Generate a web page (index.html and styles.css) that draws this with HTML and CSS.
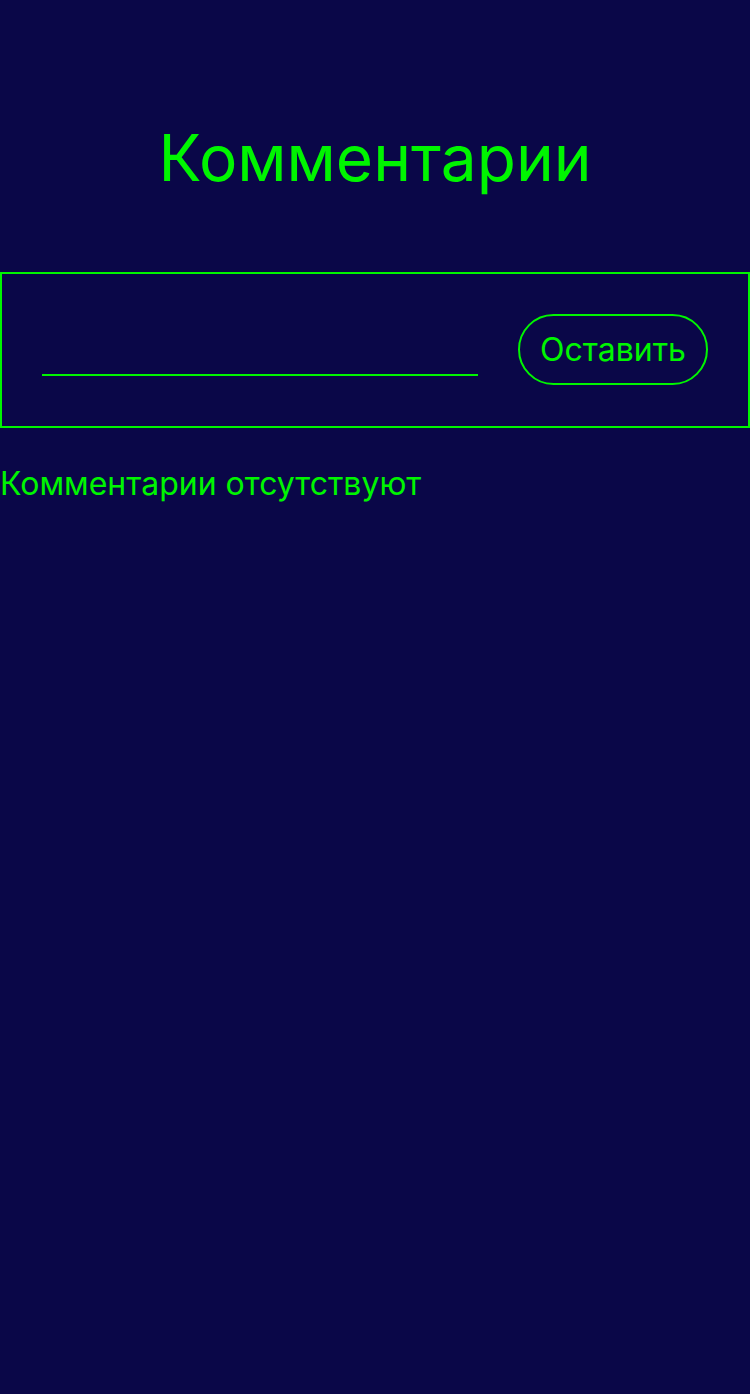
FILE: index.html
```html
<!DOCTYPE html>
<html lang="ru">
<head>
<meta charset="utf-8">
<title>Комментарии</title>
<link rel="stylesheet" href="styles.css">
</head>
<body>
<main class="page">
  <h1 class="title">Комментарии</h1>
  <form class="comment-form">
    <input class="comment-input" type="text" aria-label="Комментарий">
    <button class="submit-btn" type="button">Оставить</button>
  </form>
  <p class="empty">Комментарии отсутствуют</p>
</main>
</body>
</html>
```

FILE: styles.css
```css
html, body {
  margin: 0;
  padding: 0;
  background: #0a0748;
  min-height: 100%;
}
body {
  font-family: Inter, "Noto Sans", sans-serif;
  color: #00f500;
  height: 1394px;
}
.page {
  display: flex;
  flex-direction: column;
}
.title {
  margin: 0 0 75px;
  padding-top: 120px;
  font-size: 64px;
  font-weight: 400;
  line-height: 1.2;
  text-align: center;
}
.comment-form {
  display: flex;
  align-items: center;
  gap: 40px;
  height: 152px;
  padding: 0 40px;
  border: 2px solid #00f500;
}
.comment-input {
  flex: 1;
  min-width: 0;
  height: 53px;
  box-sizing: border-box;
  background: transparent;
  border: none;
  border-bottom: 2px solid #00f500;
  color: #00f500;
  font: inherit;
  font-size: 32px;
  outline: none;
  padding: 0;
}
.submit-btn {
  box-sizing: border-box;
  height: 71px;
  width: 190px;
  padding: 0;
  border: 2px solid #00f500;
  border-radius: 36px;
  background: transparent;
  color: #00f500;
  font-family: inherit;
  font-size: 32px;
  line-height: 1;
}
.empty {
  margin: 37px 0 0;
  font-size: 32px;
  line-height: 1.2;
}
```
